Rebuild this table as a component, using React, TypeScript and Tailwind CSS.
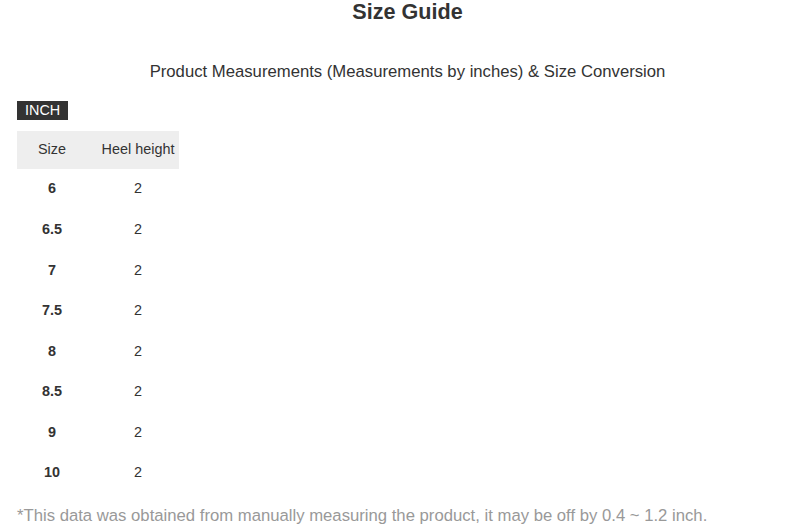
const rows = ["6", "6.5", "7", "7.5", "8", "8.5", "9", "10"];

export default function App() {
  return (
    <div className="w-[800px] h-[530px] overflow-hidden bg-white text-[#333] font-['Liberation_Sans',Arial,sans-serif]">
      <div className="pl-[15px]">
        <h1 className="text-center text-[21.6px] font-bold leading-[24px]">Size Guide</h1>
        <p className="mt-[36px] text-center text-[16.7px] leading-[24px]">
          Product Measurements (Measurements by inches) &amp; Size Conversion
        </p>
      </div>
      <div className="px-[17px]">
        <div className="mt-[17px] inline-block bg-[#333] text-white text-[14.4px] leading-[19px] px-[8px]">INCH</div>
        <table className="mt-[9px] border-collapse text-[14.4px]">
          <thead>
            <tr className="bg-[#eee] h-[38px]">
              <th className="w-[70px] p-0 font-normal text-center">Size</th>
              <th className="w-[92px] p-0 pl-[10px] font-normal text-center">Heel height</th>
            </tr>
          </thead>
          <tbody>
            {rows.map((r) => (
              <tr key={r} className="h-[40.57px]">
                <td className="p-0 text-center font-bold">{r}</td>
                <td className="p-0 pl-[10px] text-center">2</td>
              </tr>
            ))}
          </tbody>
        </table>
        <p className="mt-[12px] text-[16.7px] leading-[20px] text-[#999]">
          *This data was obtained from manually measuring the product, it may be off by 0.4 ~ 1.2 inch.
        </p>
      </div>
    </div>
  );
}
